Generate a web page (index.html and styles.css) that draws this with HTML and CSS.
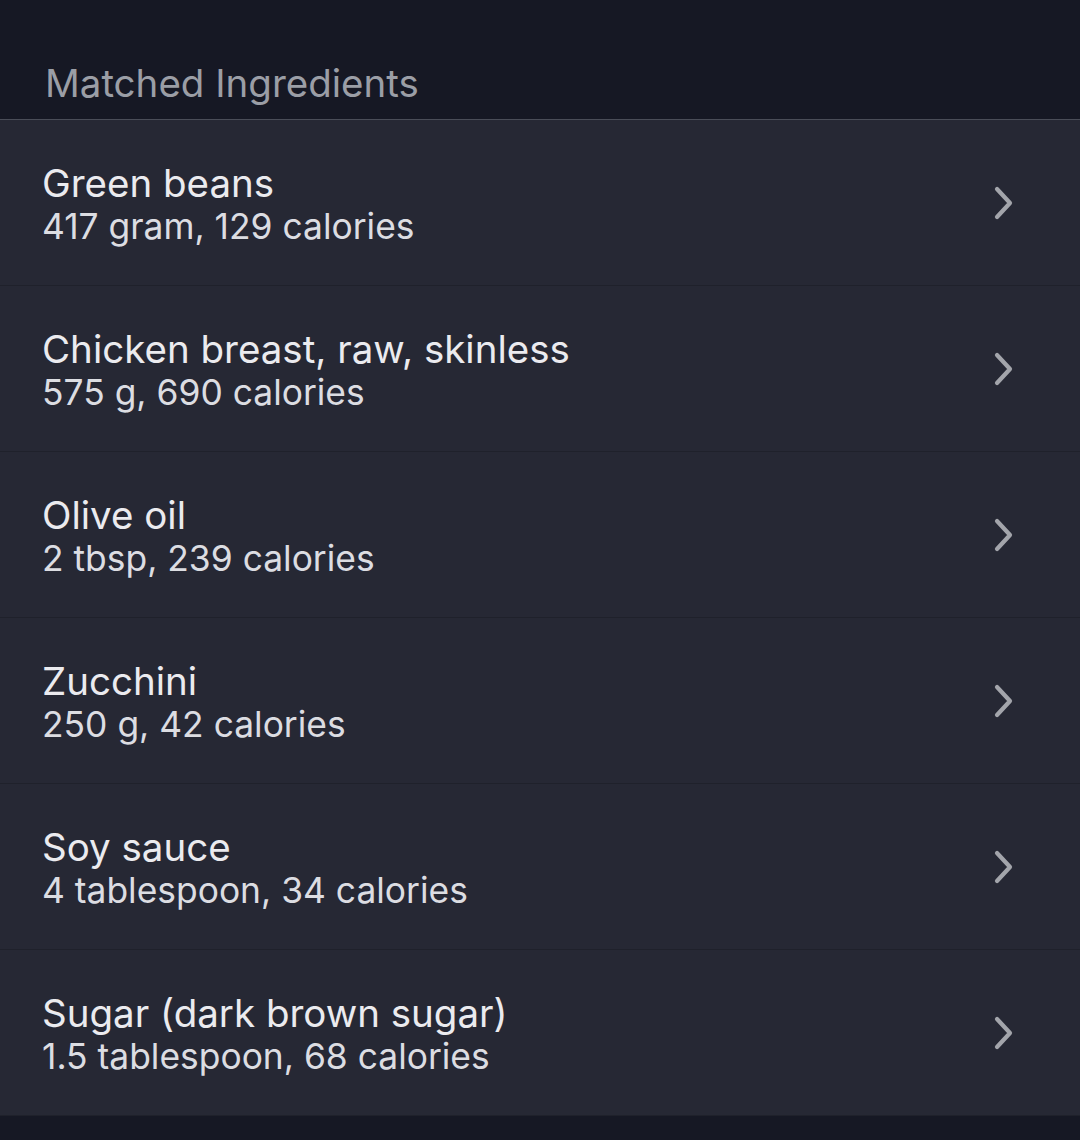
FILE: index.html
```html
<!DOCTYPE html>
<html>
<head>
<meta charset="utf-8">
<link rel="stylesheet" href="styles.css">
</head>
<body>
<div class="page">
  <div class="header"><span class="header-title">Matched Ingredients</span></div>
  <ul class="list">
    <li class="row"><div class="text"><div class="name">Green beans</div><div class="detail">417 gram, 129 calories</div></div><svg class="chev" viewBox="0 0 24 36" width="24" height="36"><path d="M5 4 L18 18 L5 32" /></svg></li>
    <li class="row"><div class="text"><div class="name">Chicken breast, raw, skinless</div><div class="detail">575 g, 690 calories</div></div><svg class="chev" viewBox="0 0 24 36" width="24" height="36"><path d="M5 4 L18 18 L5 32" /></svg></li>
    <li class="row"><div class="text"><div class="name">Olive oil</div><div class="detail">2 tbsp, 239 calories</div></div><svg class="chev" viewBox="0 0 24 36" width="24" height="36"><path d="M5 4 L18 18 L5 32" /></svg></li>
    <li class="row"><div class="text"><div class="name">Zucchini</div><div class="detail">250 g, 42 calories</div></div><svg class="chev" viewBox="0 0 24 36" width="24" height="36"><path d="M5 4 L18 18 L5 32" /></svg></li>
    <li class="row"><div class="text"><div class="name">Soy sauce</div><div class="detail">4 tablespoon, 34 calories</div></div><svg class="chev" viewBox="0 0 24 36" width="24" height="36"><path d="M5 4 L18 18 L5 32" /></svg></li>
    <li class="row"><div class="text"><div class="name">Sugar (dark brown sugar)</div><div class="detail">1.5 tablespoon, 68 calories</div></div><svg class="chev" viewBox="0 0 24 36" width="24" height="36"><path d="M5 4 L18 18 L5 32" /></svg></li>
  </ul>
</div>
</body>
</html>
```
FILE: styles.css
```css
html, body {
  margin: 0;
  padding: 0;
  background: #161824;
}
.page {
  width: 1080px;
  height: 1140px;
  background: #161824;
  font-family: Inter, "Noto Sans", sans-serif;
}
.header {
  height: 120px;
  box-sizing: border-box;
  padding: 60px 0 0 45px;
  border-bottom: 1px solid #4a4d58;
}
.header-title {
  display: block;
  color: #9b9ea6;
  font-size: 38.5px;
  line-height: 46px;
}
.list {
  list-style: none;
  margin: 0;
  padding: 0;
}
.row {
  height: 165px;
  display: flex;
  align-items: center;
  justify-content: space-between;
  padding: 0 64px 0 42px;
  background: #262834;
  border-bottom: 1px solid #1f212b;
  box-sizing: content-box;
}
.text {
  display: flex;
  flex-direction: column;
  padding-top: 4px;
}
.name {
  color: #ebebef;
  font-size: 38.5px;
  line-height: 44px;
}
.detail {
  color: #dcdde2;
  font-size: 35.4px;
  line-height: 44px;
}
.chev path {
  fill: none;
  stroke: #a3a5ab;
  stroke-width: 4.2;
  stroke-linecap: round;
  stroke-linejoin: round;
}
```
